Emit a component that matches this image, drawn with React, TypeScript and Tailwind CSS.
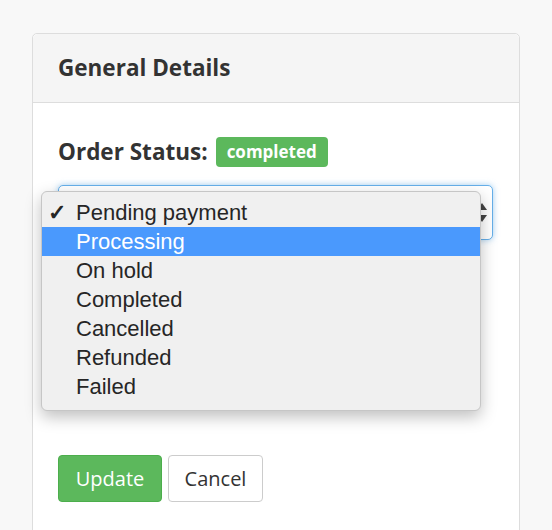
import React from 'react';

const statuses = [
  'Pending payment',
  'Processing',
  'On hold',
  'Completed',
  'Cancelled',
  'Refunded',
  'Failed',
];

const openSans = { fontFamily: '"Open Sans", "Liberation Sans", sans-serif' };

// macOS style native select popup
function StatusMenu() {
  return (
    <div
      className="absolute left-[-18px] top-[5px] w-[440px] h-[220px] rounded-[6px] border border-[#c6c6c6] bg-[#f0f0f0] pt-[6px] shadow-[0_6px_16px_rgba(0,0,0,0.25)] z-10"
      style={{ fontFamily: '"Liberation Sans", Arial, sans-serif' }}
    >
      {statuses.map((s, i) => (
        <div
          key={s}
          className={
            i === 1
              ? 'relative h-[29px] flex items-center pl-[34px] text-[22px] bg-[#4a99fd] text-white'
              : 'relative h-[29px] flex items-center pl-[34px] text-[22px] text-[#262626]'
          }
        >
          {i === 0 && (
            <span className="absolute left-[6px] top-0 h-full flex items-center text-[22px] font-bold">✓</span>
          )}
          {s}
        </div>
      ))}
    </div>
  );
}

export default function App() {
  return (
    <div className="min-h-screen bg-[#f8f8f8] pt-[33px] pl-[32px]" style={openSans}>
      <div className="w-[488px] h-[520px] rounded-t-[5px] border border-[#dddddd] bg-white">
        <div className="h-[69px] flex items-center px-[25px] bg-[#f5f5f5] border-b border-[#dddddd] rounded-t-[5px]">
          <h2 className="text-[22.5px] font-bold text-[#333333]">General Details</h2>
        </div>
        <div className="px-[25px] pt-[34px]">
          <div className="flex items-center gap-[8px] h-[30px]">
            <span className="text-[22.5px] font-bold text-[#333333]">Order Status:</span>
            <span className="h-[30px] px-[11px] flex items-center rounded-[4px] bg-[#5cb85c] text-white text-[17px] font-bold">
              completed
            </span>
          </div>
          <div className="relative mt-[18px] w-[435px] h-[55px] rounded-[5px] border border-[#66afe9] shadow-[0_0_6px_rgba(102,175,233,0.6)] bg-white">
            <svg className="absolute right-[5px] top-[17px]" width="10" height="19" viewBox="0 0 10 19">
              <path d="M5 0 L10 7 L0 7 Z" fill="#444" />
              <path d="M0 12 L10 12 L5 19 Z" fill="#444" />
            </svg>
            <StatusMenu />
          </div>
          <div className="mt-[215px] flex gap-[6px]">
            <button className="w-[104px] h-[47px] rounded-[4px] bg-[#5cb85c] border border-[#4cae4c] text-white text-[20px]">
              Update
            </button>
            <button className="w-[95px] h-[47px] rounded-[4px] bg-white border border-[#cccccc] text-[#333333] text-[20px]">
              Cancel
            </button>
          </div>
        </div>
      </div>
    </div>
  );
}
